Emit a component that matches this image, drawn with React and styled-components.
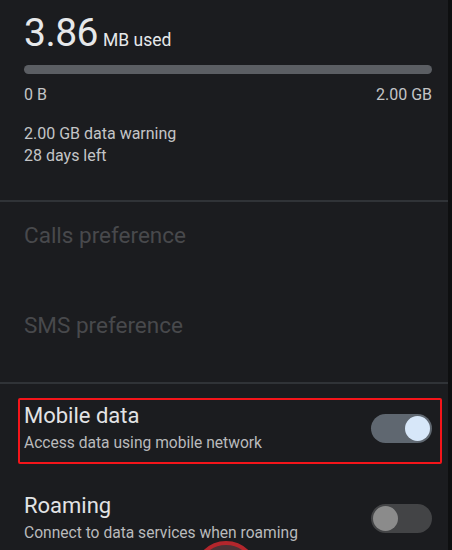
import React from 'react';
import styled, { createGlobalStyle } from 'styled-components';

const GlobalStyle = createGlobalStyle`
    html, body {
        margin: 0;
        padding: 0;
        background: #1b1c1f;
    }
    body {
        font-family: Roboto, "Open Sans", "Liberation Sans", sans-serif;
    }
`

const Screen = styled.div`
    position: relative;
    width: 448px;
    height: 550px;
    overflow: hidden;
    background: #1b1c1f;
    border-right: 4px solid #0e0f10;
`

const Usage = styled.section`
    height: 190px;
    padding: 10px 16px 0 24px;
`

const Amount = styled.div`
    display: flex;
    align-items: baseline;
    gap: 5px;
    color: #e6e8ea;
    .value {
        font-size: 39px;
        line-height: 46px;
        letter-spacing: -0.5px;
    }
    .unit {
        font-size: 17.5px;
    }
`

const Bar = styled.div`
    height: 9px;
    margin-top: 9px;
    border-radius: 5px;
    background: #5b5e63;
`

const Scale = styled.div`
    display: flex;
    justify-content: space-between;
    margin-top: 11px;
    font-size: 16px;
    color: #c4c5c7;
`

const Note = styled.div`
    margin-top: 19px;
    font-size: 16px;
    line-height: 22px;
    color: #c4c5c7;
`

const Divider = styled.hr`
    margin: 0;
    border: 0;
    height: 2px;
    background: #303337;
`

const Preference = styled.div`
    height: 70px;
    padding: 20px 24px 0;
    font-size: 22.5px;
    line-height: 26px;
    color: #48494c;
`

const Toggles = styled.section`
    display: flex;
    flex-direction: column;
    gap: 24px;
    padding-top: 14px;
`

const Row = styled.div`
    display: flex;
    justify-content: space-between;
    height: 62px;
    margin: 0 6px 0 18px;
    padding: 0 8px 0 4px;
    border: 2px solid ${p => (p.$highlight ? '#f4151a' : 'transparent')};
    border-radius: 2px;
`

const Texts = styled.div`
    padding-top: 4px;
    .title {
        font-size: 22px;
        line-height: 24px;
        color: #e2e3e5;
    }
    .sub {
        margin-top: 6px;
        font-size: 15.6px;
        line-height: 18px;
        color: #b9babc;
    }
`

const Switch = styled.div`
    display: flex;
    align-items: center;
    justify-content: ${p => (p.$on ? 'flex-end' : 'flex-start')};
    width: 61px;
    height: 29px;
    margin-top: 14px;
    padding: 0 2px;
    box-sizing: border-box;
    border-radius: 15px;
    background: ${p => (p.$on ? '#5f6770' : '#434446')};
    .thumb {
        width: 25px;
        height: 25px;
        border-radius: 50%;
        background: ${p => (p.$on ? '#d7e7f9' : '#8b8b8b')};
    }
`

const Touch = styled.div`
    position: absolute;
    left: 194px;
    top: 541px;
    width: 56px;
    height: 56px;
    border-radius: 50%;
    border: 4px solid #b3262c;
    background: #4a3336;
`

const App = () => {
    return (
        <Screen>
            <GlobalStyle />
            <Usage>
                <Amount>
                    <span className="value">3.86</span>
                    <span className="unit">MB used</span>
                </Amount>
                <Bar />
                <Scale>
                    <span>0 B</span>
                    <span>2.00 GB</span>
                </Scale>
                <Note>
                    2.00 GB data warning<br />
                    28 days left
                </Note>
            </Usage>
            <Divider />
            <Preference>Calls preference</Preference>
            <Preference>SMS preference</Preference>
            <Divider />
            <Toggles>
                <Row $highlight>
                    <Texts>
                        <div className="title">Mobile data</div>
                        <div className="sub">Access data using mobile network</div>
                    </Texts>
                    <Switch $on><div className="thumb" /></Switch>
                </Row>
                <Row>
                    <Texts>
                        <div className="title">Roaming</div>
                        <div className="sub">Connect to data services when roaming</div>
                    </Texts>
                    <Switch><div className="thumb" /></Switch>
                </Row>
            </Toggles>
            <Touch />
        </Screen>
    );
}

export default App;
